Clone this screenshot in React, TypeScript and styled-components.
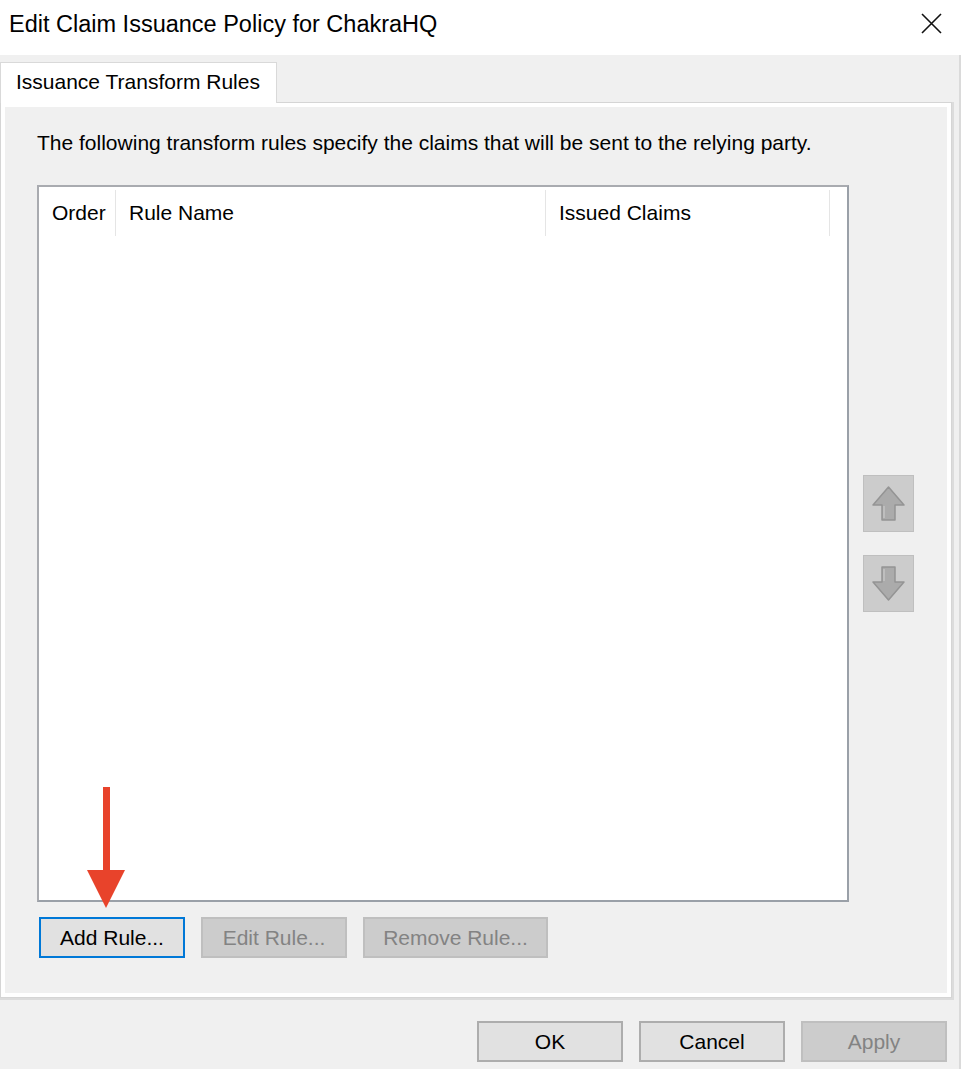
import React from "react";
import styled, { createGlobalStyle } from "styled-components";

const GlobalStyle = createGlobalStyle`
  html, body { margin: 0; padding: 0; }
  body {
    background: #f0f0f0;
    font-family: "Liberation Sans", Arial, sans-serif;
    color: #000;
  }
  * { box-sizing: border-box; }
`;

const Window = styled.div`
  position: relative;
  width: 961px;
  height: 1069px;
  display: flex;
  flex-direction: column;
  background: #f0f0f0;
  overflow: hidden;
`;

const TitleBar = styled.div`
  height: 55px;
  flex: none;
  background: #ffffff;
  display: flex;
  align-items: center;
  justify-content: space-between;
  padding: 0 19px 8px 9px;
`;

const Title = styled.div`
  font-size: 23.5px;
  line-height: 28px;
  white-space: nowrap;
`;

const CloseButton = styled.button`
  width: 21px;
  height: 21px;
  padding: 0;
  border: none;
  background: transparent;
  display: flex;
  align-items: center;
  justify-content: center;
`;

const Body = styled.div`
  flex: 1;
  display: flex;
  flex-direction: column;
  padding: 7px 0 0 0;
  border-right: 2px solid #dadada;
`;

const TabStrip = styled.div`
  display: flex;
  position: relative;
  z-index: 1;
  margin-bottom: -1px;
`;

const Tab = styled.div`
  height: 41px;
  width: 277px;
  background: #ffffff;
  border: 1px solid #d9d9d9;
  border-bottom: none;
  font-size: 21px;
  line-height: 24px;
  padding: 7px 0 0 15px;
  white-space: nowrap;
`;

const Panel = styled.div`
  width: 952px;
  height: 896px;
  flex: none;
  border: 1px solid #d5d5d5;
  box-shadow: inset 0 0 0 4px #ffffff, 1px 1px 0 1px #dcdcdc;
  background: #f0f0f0;
  padding: 28px 0 0 36px;
  display: flex;
  flex-direction: column;
`;

const Description = styled.div`
  font-size: 21px;
  line-height: 24px;
  white-space: nowrap;
`;

const ListRow = styled.div`
  margin-top: 30px;
  display: flex;
  align-items: center;
  gap: 14px;
`;

const ListBox = styled.div`
  width: 812px;
  height: 717px;
  background: #ffffff;
  border: 2px solid #a9abb0;
  border-right-color: #9aa0a8;
  border-bottom-color: #9aa0a8;
  display: flex;
  flex-direction: column;
`;

const HeaderRow = styled.div`
  margin-top: 3px;
  height: 46px;
  display: flex;
`;

const HeaderCell = styled.div<{ $w: number }>`
  width: ${(p) => p.$w}px;
  flex: none;
  display: flex;
  align-items: center;
  padding-left: 13px;
  font-size: 21px;
  line-height: 24px;
  border-right: 1px solid #e5e5e5;
  white-space: nowrap;
`;

const SideButtons = styled.div`
  display: flex;
  flex-direction: column;
  gap: 23px;
`;

const ArrowButton = styled.button`
  width: 51px;
  height: 57px;
  padding: 0;
  background: #cccccc;
  border: 1px solid #bfbfbf;
  display: flex;
  align-items: center;
  justify-content: center;
`;

const ButtonRow = styled.div`
  margin-top: 15px;
  display: flex;
  gap: 16px;
  padding-left: 2px;
`;

const Btn = styled.button<{ $w?: number; $focused?: boolean }>`
  width: ${(p) => p.$w ?? 146}px;
  height: 41px;
  font-family: "Liberation Sans", Arial, sans-serif;
  font-size: 21px;
  line-height: 24px;
  padding: 0;
  color: ${(p) => (p.disabled ? "#838383" : "#000000")};
  background: ${(p) => (p.disabled ? "#cccccc" : "#e1e1e1")};
  border: 2px solid
    ${(p) => (p.$focused ? "#0078d7" : p.disabled ? "#bfbfbf" : "#adadad")};
  display: flex;
  align-items: center;
  justify-content: center;
  white-space: nowrap;
`;

const Footer = styled.div`
  display: flex;
  justify-content: flex-end;
  gap: 16px;
  padding: 23px 12px 0 0;
`;

const Annotation = styled.svg`
  position: absolute;
  left: 80px;
  top: 780px;
  pointer-events: none;
`;

const UpArrow = () => (
  <svg width="33" height="35" viewBox="0 0 33 35">
    <path
      d="M16.5 1 L32 19 L23 19 L23 34 L10 34 L10 19 L1 19 Z"
      fill="#ababab"
      stroke="#949494"
      strokeWidth="1.5"
      strokeLinejoin="round"
    />
    <path d="M12 20 L12 32" stroke="#c4c4c4" strokeWidth="1.5" />
  </svg>
);

const DownArrow = () => (
  <svg width="33" height="35" viewBox="0 0 33 35">
    <path
      d="M16.5 34 L32 16 L23 16 L23 1 L10 1 L10 16 L1 16 Z"
      fill="#ababab"
      stroke="#949494"
      strokeWidth="1.5"
      strokeLinejoin="round"
    />
    <path d="M12 3 L12 15" stroke="#c4c4c4" strokeWidth="1.5" />
  </svg>
);

export default function App() {
  return (
    <>
      <GlobalStyle />
      <Window>
        <TitleBar>
          <Title>Edit Claim Issuance Policy for ChakraHQ</Title>
          <CloseButton aria-label="Close">
            <svg width="21" height="21" viewBox="0 0 21 21">
              <path d="M1 1 L20 20 M20 1 L1 20" stroke="#111" strokeWidth="1.6" />
            </svg>
          </CloseButton>
        </TitleBar>
        <Body>
          <TabStrip>
            <Tab>Issuance Transform Rules</Tab>
          </TabStrip>
          <Panel>
            <Description>
              The following transform rules specify the claims that will be sent to the relying party.
            </Description>
            <ListRow>
              <ListBox>
                <HeaderRow>
                  <HeaderCell $w={77}>Order</HeaderCell>
                  <HeaderCell $w={430}>Rule Name</HeaderCell>
                  <HeaderCell $w={284}>Issued Claims</HeaderCell>
                </HeaderRow>
              </ListBox>
              <SideButtons>
                <ArrowButton disabled aria-label="Move up">
                  <UpArrow />
                </ArrowButton>
                <ArrowButton disabled aria-label="Move down">
                  <DownArrow />
                </ArrowButton>
              </SideButtons>
            </ListRow>
            <ButtonRow>
              <Btn $focused>Add Rule...</Btn>
              <Btn disabled>Edit Rule...</Btn>
              <Btn disabled $w={185}>Remove Rule...</Btn>
            </ButtonRow>
          </Panel>
          <Footer>
            <Btn>OK</Btn>
            <Btn>Cancel</Btn>
            <Btn disabled>Apply</Btn>
          </Footer>
        </Body>
        <Annotation width="60" height="135" viewBox="0 0 60 135">
          <rect x="23" y="7" width="7" height="86" fill="#e8432b" />
          <path d="M7 90 L45 90 L26 128 Z" fill="#e8432b" />
        </Annotation>
      </Window>
    </>
  );
}
